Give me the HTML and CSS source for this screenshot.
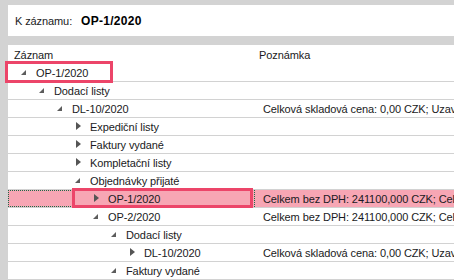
FILE: index.html
```html
<!DOCTYPE html>
<html>
<head>
<meta name="viewport" content="width=device-width, initial-scale=1.0">
  <title>Strom vazeb</title>
  <link rel="stylesheet" href="styles.css">
</head>
<body>
  <div class="record-bar">
    <span class="record-label">K záznamu:</span>
    <span class="record-value">OP-1/2020</span>
  </div>

  <div class="grid">
    <div class="grid-head">
      <div class="head-cell head-tree">Záznam</div>
      <div class="head-cell head-note">Poznámka</div>
    </div>

    <div class="row">
      <div class="cell tree l0"><span class="node open"></span>OP-1/2020</div>
      <div class="cell note"></div>
      <div class="mark mark-root"></div>
    </div>
    <div class="row">
      <div class="cell tree l1"><span class="node open"></span>Dodací listy</div>
      <div class="cell note"></div>
    </div>
    <div class="row">
      <div class="cell tree l2"><span class="node open"></span>DL-10/2020</div>
      <div class="cell note">Celková skladová cena: 0,00 CZK; Uzavřeno</div>
    </div>
    <div class="row">
      <div class="cell tree l3"><span class="node closed"></span>Expediční listy</div>
      <div class="cell note"></div>
    </div>
    <div class="row">
      <div class="cell tree l3"><span class="node closed"></span>Faktury vydané</div>
      <div class="cell note"></div>
    </div>
    <div class="row">
      <div class="cell tree l3"><span class="node closed"></span>Kompletační listy</div>
      <div class="cell note"></div>
    </div>
    <div class="row">
      <div class="cell tree l3"><span class="node open"></span>Objednávky přijaté</div>
      <div class="cell note"></div>
    </div>
    <div class="row selected">
      <div class="cell tree l4 focused"><span class="node closed"></span>OP-1/2020</div>
      <div class="cell note">Celkem bez DPH: 241100,000 CZK; Celkem s DPH</div>
      <div class="mark mark-selected"></div>
    </div>
    <div class="row">
      <div class="cell tree l4"><span class="node open"></span>OP-2/2020</div>
      <div class="cell note">Celkem bez DPH: 241100,000 CZK; Celkem s DPH</div>
    </div>
    <div class="row">
      <div class="cell tree l5"><span class="node open"></span>Dodací listy</div>
      <div class="cell note"></div>
    </div>
    <div class="row">
      <div class="cell tree l6"><span class="node closed"></span>DL-10/2020</div>
      <div class="cell note">Celková skladová cena: 0,00 CZK; Uzavřeno</div>
    </div>
    <div class="row">
      <div class="cell tree l5"><span class="node open"></span>Faktury vydané</div>
      <div class="cell note"></div>
    </div>
  </div>
</body>
</html>
```

FILE: styles.css
```css
body {
  margin: 0;
  padding-top: 5px;
  height: 275px;
  overflow: hidden;
  background-color: #d3d3d3;
  font-family: "Liberation Sans", Arial, sans-serif;
  font-size: 11px;
  letter-spacing: -0.1px;
  color: #1a1a22;
}

/* Top bar with the record number */
.record-bar {
  display: flex;
  align-items: center;
  height: 31px;
  margin: 0 0 9px 8px;
  padding-left: 7px;
  background-color: #fff;
}

.record-label {
  width: 66px;
}

.record-value {
  font-size: 12px;
  font-weight: bold;
  letter-spacing: 0.3px;
  color: #000;
}

/* Tree grid */
.grid {
  margin-left: 8px;
  background-color: #fff;
  height: 240px;
}

.grid-head {
  display: grid;
  grid-template-columns: 247px 1fr;
  height: 19px;
  align-items: center;
}

.head-tree {
  padding-left: 6px;
}

.head-note {
  padding-left: 4px;
}

.row {
  position: relative;
  display: grid;
  grid-template-columns: 247px 1fr;
  height: 18px;
  box-sizing: border-box;
  border-bottom: 1px solid #d2d2d2;
}

.cell {
  display: flex;
  align-items: center;
  white-space: nowrap;
  overflow: hidden;
}

.note {
  padding-left: 8px;
}

.l0 { padding-left: 10px; }
.l1 { padding-left: 28px; }
.l2 { padding-left: 46px; }
.l3 { padding-left: 64px; }
.l4 { padding-left: 82px; }
.l5 { padding-left: 100px; }
.l6 { padding-left: 118px; }

/* Expand / collapse glyphs */
.node {
  flex: none;
  position: relative;
  width: 18px;
  height: 17px;
}

.node.open::before {
  content: "";
  position: absolute;
  left: 3px;
  top: 6px;
  border-style: solid;
  border-width: 0 0 5px 5px;
  border-color: transparent transparent #5c5c5c transparent;
}

.node.closed::before {
  content: "";
  position: absolute;
  left: 4px;
  top: 4px;
  border-style: solid;
  border-width: 4.5px 0 4.5px 5px;
  border-color: transparent transparent transparent #555;
}

/* Selected row */
.selected {
  background-color: #f7a6b4;
}

.focused {
  outline: 1px dotted #1c6a48;
  outline-offset: -1px;
}

/* Highlight frames drawn over the tree */
.mark {
  position: absolute;
  box-sizing: border-box;
  border: 3px solid #ec4569;
}

.mark-root {
  left: -3px;
  top: -3px;
  width: 108px;
  height: 22px;
}

.mark-selected {
  left: 64px;
  top: -2px;
  width: 181px;
  height: 20px;
}
```
